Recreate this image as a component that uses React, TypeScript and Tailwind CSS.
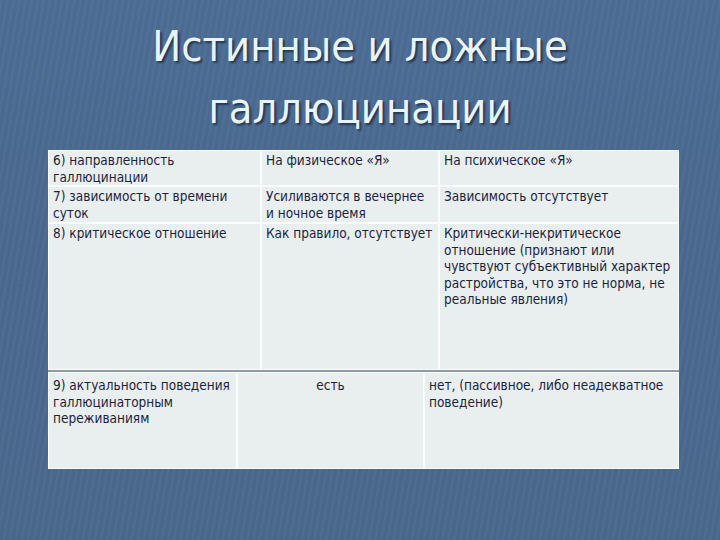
const top = [
  {
    a: "6) направленность галлюцинации",
    b: "На физическое «Я»",
    c: "На психическое «Я»",
    h: "h-[34px]",
  },
  {
    a: "7) зависимость от времени суток",
    b: "Усиливаются в вечернее\nи ночное время",
    c: "Зависимость отсутствует",
    h: "h-[35px]",
  },
  {
    a: "8) критическое отношение",
    b: "Как правило, отсутствует",
    c: "Критически-некритическое отношение (признают или чувствуют субъективный характер растройства, что это не норма, не реальные явления)",
    h: "h-[145px]",
  },
];

export default function App() {
  return (
    <div
      className="w-[720px] h-[540px] overflow-hidden bg-[#4b6a90] flex flex-col"
      style={{
        backgroundImage:
          "repeating-linear-gradient(100deg, rgba(255,255,255,0.025) 0px, rgba(255,255,255,0.025) 2px, rgba(0,0,0,0.02) 3px, rgba(0,0,0,0.02) 6px), linear-gradient(180deg, #4d6d95 0%, #4a698f 50%, #4a688e 100%)",
      }}
    >
      {/* Title */}
      <h1
        className="mt-[15px] h-[135px] text-center text-[43px] leading-[62px] text-[#e9f5f5] [font-family:'DejaVu_Sans_Condensed','DejaVu_Sans',sans-serif] [font-stretch:condensed] [text-shadow:2px_2px_2px_rgba(10,20,40,0.6)]"
      >
        Истинные и ложные
        <br />
        галлюцинации
      </h1>

      {/* Tables */}
      <div className="ml-[48px] w-[631px] flex flex-col gap-[2px] bg-[#8e9ba8] text-[13.5px] leading-[16.5px] text-[#1b1f3f] [font-family:'DejaVu_Sans_Condensed','DejaVu_Sans',sans-serif] [font-stretch:condensed]">
        <div className="flex flex-col gap-[2px] bg-[#fafcfc] p-[1px]">
          {top.map((r) => (
            <div key={r.a} className={`grid grid-cols-[211px_176px_1fr] gap-[2px] ${r.h}`}>
              <div className="bg-[#e9eeee] pl-[4px] pr-[2px] pt-[1px]">{r.a}</div>
              <div className="bg-[#e9eeee] pl-[4px] pr-[2px] pt-[1px] whitespace-pre-line">{r.b}</div>
              <div className="bg-[#e9eeee] pl-[4px] pr-[2px] pt-[1px]">{r.c}</div>
            </div>
          ))}
        </div>
        <div className="grid grid-cols-[187px_185px_1fr] gap-[2px] h-[97px] bg-[#fafcfc] p-[1px]">
          <div className="bg-[#e9eeee] pl-[4px] pr-[2px] pt-[4px]">
            9) актуальность поведения галлюцинаторным переживаниям
          </div>
          <div className="bg-[#e9eeee] px-[4px] pt-[4px] text-center">есть</div>
          <div className="bg-[#e9eeee] pl-[4px] pr-[2px] pt-[4px]">
            нет, (пассивное, либо неадекватное поведение)
          </div>
        </div>
      </div>
    </div>
  );
}
